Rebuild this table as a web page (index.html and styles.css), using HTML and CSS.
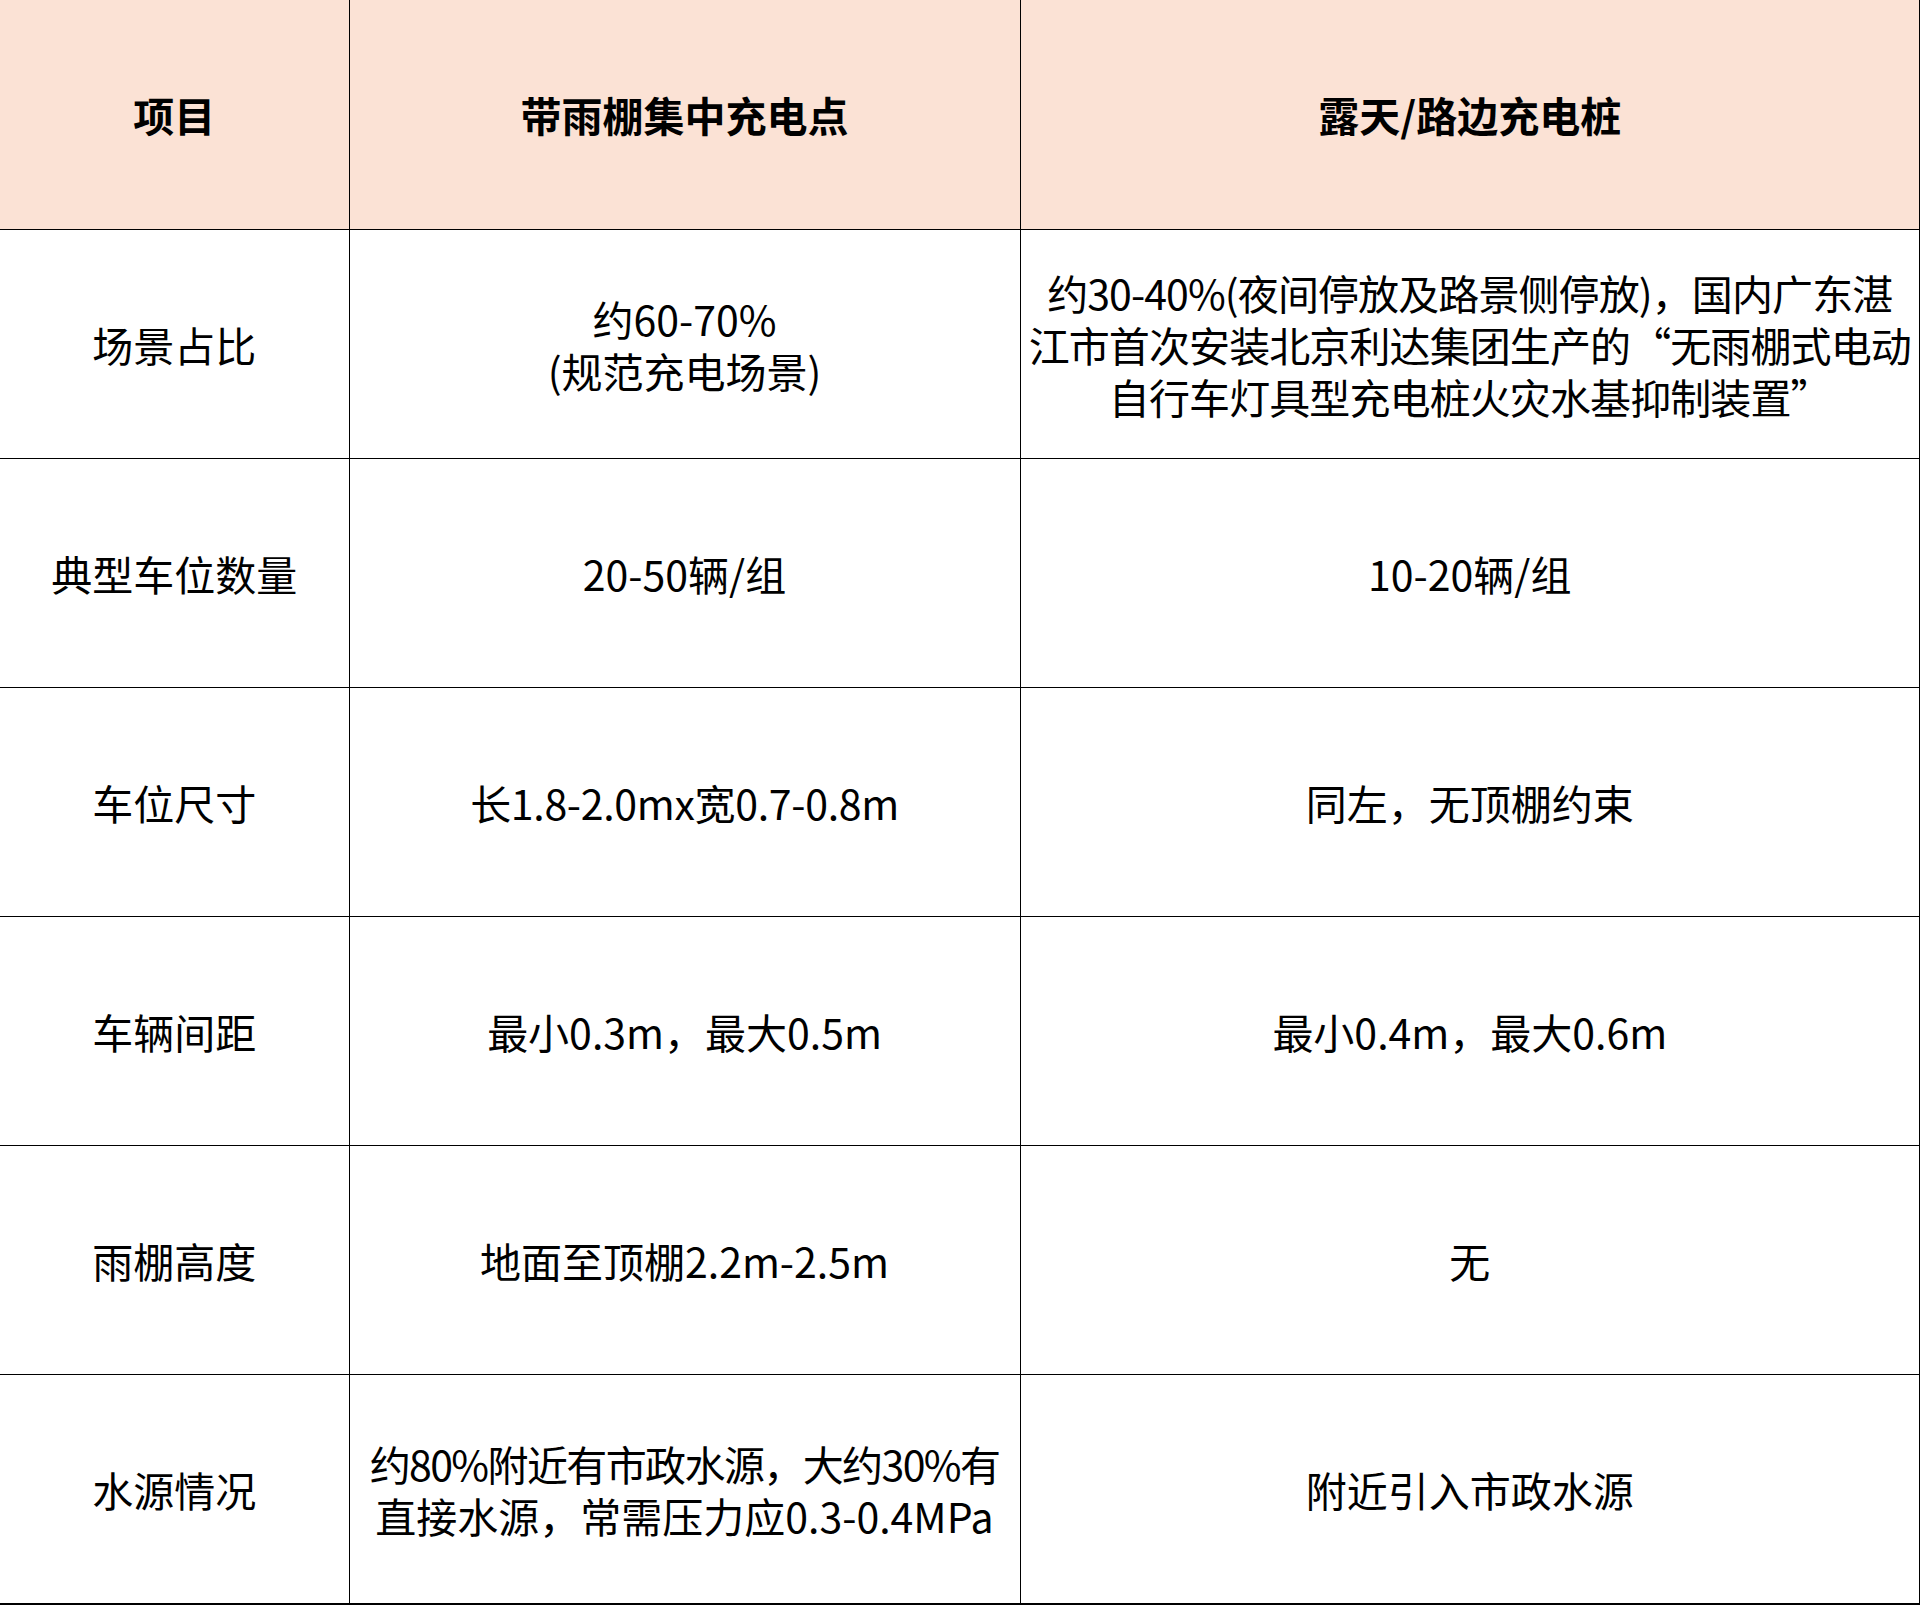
FILE: index.html
```html
<!DOCTYPE html>
<html lang="zh-CN">
<head>
<meta charset="utf-8">
<title>充电场景对比</title>
<link rel="stylesheet" href="styles.css">
</head>
<body>
<table class="compare">
  <colgroup>
    <col class="c-item">
    <col class="c-shed">
    <col class="c-open">
  </colgroup>
  <thead>
    <tr class="head-row">
      <th>项目</th>
      <th>带雨棚集中充电点</th>
      <th>露天/路边充电桩</th>
    </tr>
  </thead>
  <tbody>
    <tr>
      <td>场景占比</td>
      <td>约60-70%<br>(规范充电场景)</td>
      <td class="long">约30-40%(夜间停放及路景侧停放)，国内广东湛<br>江市首次安装北京利达集团生产的“无雨棚式电动<br>自行车灯具型充电桩火灾水基抑制装置”</td>
    </tr>
    <tr>
      <td>典型车位数量</td>
      <td>20-50辆/组</td>
      <td>10-20辆/组</td>
    </tr>
    <tr>
      <td>车位尺寸</td>
      <td class="tight">长1.8-2.0mx宽0.7-0.8m</td>
      <td>同左，无顶棚约束</td>
    </tr>
    <tr>
      <td>车辆间距</td>
      <td>最小0.3m，最大0.5m</td>
      <td>最小0.4m，最大0.6m</td>
    </tr>
    <tr>
      <td>雨棚高度</td>
      <td>地面至顶棚2.2m-2.5m</td>
      <td>无</td>
    </tr>
    <tr class="last-row">
      <td>水源情况</td>
      <td class="squeeze">约80%附近有市政水源，大约30%有<br><span class="wide-line">直接水源，常需压力应0.3-0.4MPa</span></td>
      <td>附近引入市政水源</td>
    </tr>
  </tbody>
</table>
</body>
</html>
```

FILE: styles.css
```css
html, body {
  margin: 0;
  padding: 0;
  background: #ffffff;
}

body {
  width: 1920px;
  height: 1606px;
  overflow: hidden;
  font-family: "Noto Sans CJK SC", "Noto Sans", "Liberation Sans", sans-serif;
  color: #000000;
}

.compare {
  width: 1920px;
  table-layout: fixed;
  border-collapse: collapse;
  border-spacing: 0;
}

.c-item { width: 349px; }
.c-shed { width: 671px; }
.c-open { width: 900px; }

.compare th,
.compare td {
  border: 1px solid #000000;
  text-align: center;
  vertical-align: middle;
  padding: 0 4px;
  font-size: 41px;
  line-height: 52px;
  white-space: nowrap;
}

.compare tr {
  height: 229px;
}

.compare tr.last-row {
  height: 230px;
}

.compare th {
  background: #fbe2d5;
  font-weight: 700;
  border-top: none;
}

.compare th:first-child,
.compare td:first-child {
  border-left: none;
}

.compare th:last-child,
.compare td:last-child {
  border-right: 2px solid #000000;
}

.compare .last-row td {
  border-bottom: 2px solid #000000;
}

.compare td {
  font-weight: 400;
}

.compare td.long {
  padding: 0;
  letter-spacing: -0.9px;
}

.compare td.tight {
  letter-spacing: -0.3px;
}

.compare td.squeeze {
  letter-spacing: -1.6px;
}

.compare td.squeeze .wide-line {
  letter-spacing: 0;
}
```
